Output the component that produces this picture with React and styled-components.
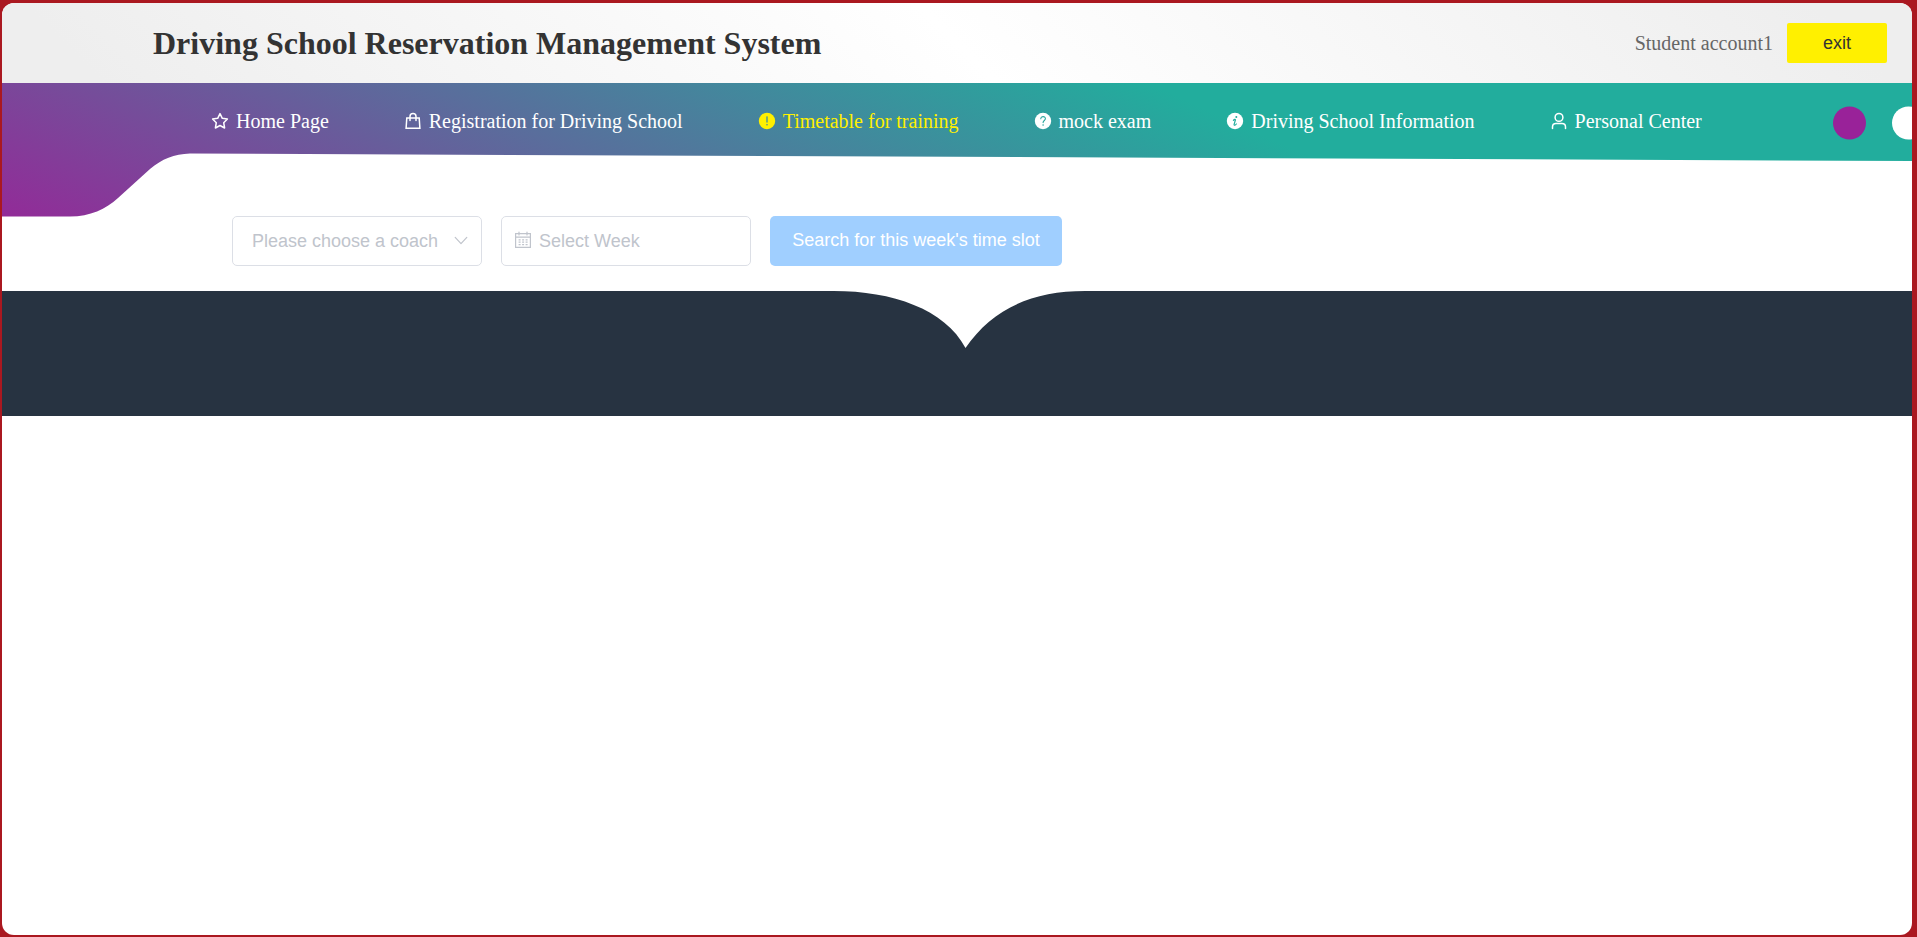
import React from "react";
import styled, { createGlobalStyle } from "styled-components";

const GlobalStyle = createGlobalStyle`
  * { box-sizing: border-box; }
  body {
    margin: 0;
    background: #aa1820;
    font-family: "Liberation Serif", serif;
  }
  #root { display: flow-root; }
`;

const sans = `"Liberation Sans", sans-serif`;

const Frame = styled.div`
  margin: 3px 5px 2px 2px;
  min-height: calc(100vh - 5px);
  border-radius: 12px;
  overflow: hidden;
  background: #fff;
`;

const Header = styled.header`
  display: flex;
  align-items: center;
  height: 80px;
  padding: 0 25px 0 151px;
  background: linear-gradient(45deg, #eee 5%, #fff 50%, #eee 95%);
`;

const Title = styled.h1`
  flex: 1;
  margin: 0;
  font-size: 32px;
  line-height: 40px;
  color: #333;
`;

const Account = styled.span`
  margin-right: 14px;
  font-size: 20px;
  color: #666;
`;

const ExitButton = styled.button`
  width: 100px;
  height: 40px;
  padding: 0;
  border: 0;
  border-radius: 2px;
  background: #fff000;
  color: #333;
  font: 18px ${sans};
`;

const Nav = styled.nav`
  position: relative;
  height: 133px;
`;

const NavBackdrop = styled.svg`
  position: absolute;
  inset: 0;
  width: 100%;
  height: 134px;
`;

const NavList = styled.ul`
  position: relative;
  display: flex;
  gap: 72px;
  margin: 0;
  padding: 8px 0 0 206px;
  list-style: none;
`;

const NavLink = styled.a`
  display: flex;
  align-items: center;
  gap: 4px;
  height: 60px;
  white-space: nowrap;
  font-size: 20px;
  text-decoration: none;
  color: ${(p) => (p.$active ? "#fff000" : "#fff")};
`;

const IconBox = styled.span`
  display: flex;
  justify-content: center;
  width: 24px;
`;

const Filters = styled.form`
  display: flex;
  gap: 19px;
  padding: 0 230px 25px;
`;

const Field = styled.div`
  display: flex;
  position: relative;
  width: 250px;
  height: 50px;
  color: #c0c4cc;
`;

const fieldStyle = `
  width: 100%;
  border: 1px solid #dcdfe6;
  border-radius: 5px;
  background: #fff;
  color: #c0c4cc;
  font: 18px ${sans};
  outline: 0;
`;

const CoachSelect = styled.select`
  ${fieldStyle}
  appearance: none;
  padding: 0 40px 0 19px;
`;

const WeekInput = styled.input`
  ${fieldStyle}
  padding: 0 12px 0 37px;
  &::placeholder { color: #c0c4cc; opacity: 1; }
`;

const FieldIcon = styled.svg`
  position: absolute;
  top: 15px;
  left: ${(p) => (p.$end ? "auto" : "13px")};
  right: ${(p) => (p.$end ? "12px" : "auto")};
  pointer-events: none;
`;

const SearchButton = styled.button`
  width: 292px;
  height: 50px;
  padding: 0 0 2px;
  border: 0;
  border-radius: 5px;
  background: #a0cfff;
  color: #fff;
  font: 18px ${sans};
`;

const Footer = styled.footer`
  height: 125px;
  background: #273341;
`;

const Notch = styled.svg`
  display: block;
  width: 100%;
  height: 58px;
`;

const line = { fill: "none", stroke: "currentColor", strokeWidth: 1.5, strokeLinejoin: "round", strokeLinecap: "round" };

const icons = {
  star: (
    <path {...line} d="M9 1.6 11.3 6.3 16.4 7 12.7 10.7 13.6 16 9 13.5 4.4 16 5.3 10.7 1.6 7 6.7 6.3Z" />
  ),
  bag: (
    <path {...line} strokeLinejoin="miter" d="M2.8 6H15.2L15.9 16.2H2.1ZM6 8.4V4.4C6 .5 12 .5 12 4.4V8.4" />
  ),
  warning: (
    <>
      <circle cx="9" cy="9" r="8.2" fill="currentColor" />
      <path d="M9 4.8V10" stroke="#3f8d9e" strokeWidth="1.3" strokeLinecap="round" />
      <circle cx="9" cy="12.8" r=".8" fill="#3f8d9e" />
    </>
  ),
  question: (
    <>
      <circle cx="9" cy="9" r="8.2" fill="currentColor" />
      <path d="M6.8 6.8C6.8 3.8 11.5 4 11.4 6.8 11.3 8.5 9.1 8.5 9.1 10.6" fill="none" stroke="#28a59c" strokeWidth="1.1" strokeLinecap="round" />
      <circle cx="9.1" cy="13" r=".8" fill="#28a59c" />
    </>
  ),
  info: (
    <>
      <circle cx="9" cy="9" r="8.2" fill="currentColor" />
      <circle cx="10.3" cy="4.9" r="1" fill="#22ad9d" />
      <path d="M7.4 8.3C8.2 7.5 9.6 6.9 9.4 8L8.1 12.4C7.9 13.9 9.4 13.2 10.3 12" fill="none" stroke="#22ad9d" strokeWidth="1.2" strokeLinecap="round" strokeLinejoin="round" />
    </>
  ),
  user: (
    <>
      <circle cx="9" cy="5.4" r="3.9" {...line} />
      <path {...line} d="M2.5 16.4V15C2.5 12.6 4 11.6 6 11.6H12C14 11.6 15.5 12.6 15.5 15V16.4" />
    </>
  ),
};

const items = [
  { label: "Home Page", icon: "star" },
  { label: "Registration for Driving School", icon: "bag" },
  { label: "Timetable for training", icon: "warning", active: true },
  { label: "mock exam", icon: "question" },
  { label: "Driving School Information", icon: "info" },
  { label: "Personal Center", icon: "user" },
];

export default function App() {
  return (
    <>
      <GlobalStyle />
      <Frame>
        <Header>
          <Title>Driving School Reservation Management System</Title>
          <Account>Student account1</Account>
          <ExitButton type="button">exit</ExitButton>
        </Header>
        <Nav>
          <NavBackdrop viewBox="0 0 1910 134" preserveAspectRatio="none" aria-hidden="true">
            <defs>
              <linearGradient id="sweep" gradientUnits="userSpaceOnUse" x1="0" y1="134" x2="247" y2="-409">
                <stop offset="0" stopColor="#922b98" />
                <stop offset="0.5" stopColor="#596e9c" />
                <stop offset="1" stopColor="#22ad9d" />
              </linearGradient>
            </defs>
            <path fill="url(#sweep)" d="M0 0H1910V78L188 70.5C172 71 160 76 148 86L116 115C104 126 88 133.5 68 133.5H0Z" />
            <circle cx="1847.5" cy="40" r="16.5" fill="#992299" />
            <circle cx="1906.5" cy="40" r="16.5" fill="#fff" />
          </NavBackdrop>
          <NavList>
            {items.map((item) => (
              <li key={item.label}>
                <NavLink href="#" $active={item.active}>
                  <IconBox>
                    <svg width="18" height="18" viewBox="0 0 18 18" aria-hidden="true">{icons[item.icon]}</svg>
                  </IconBox>
                  {item.label}
                </NavLink>
              </li>
            ))}
          </NavList>
        </Nav>
        <Filters>
          <Field>
            <CoachSelect aria-label="Coach" defaultValue="">
              <option value="">Please choose a coach</option>
            </CoachSelect>
            <FieldIcon $end width="18" height="18" viewBox="0 0 18 18" aria-hidden="true">
              <path {...line} strokeWidth="1.2" d="M3.2 6.4 9 12.6 14.8 6.4" />
            </FieldIcon>
          </Field>
          <Field>
            <WeekInput type="text" aria-label="Week" placeholder="Select Week" />
            <FieldIcon width="18" height="18" viewBox="0 0 18 18" aria-hidden="true">
              <path {...line} strokeWidth="1.2" strokeLinejoin="miter" d="M1.6 2.6H16.4V16.4H1.6ZM1.6 6.2H16.4M5 1V4M13 1V4" />
              <path fill="none" stroke="currentColor" strokeWidth="1.2" strokeDasharray="2 1.5" d="M4.6 8.8H13.6M4.6 11.2H13.6M4.6 13.6H13.6" />
            </FieldIcon>
          </Field>
          <SearchButton type="button">Search for this week's time slot</SearchButton>
        </Filters>
        <Footer>
          <Notch viewBox="0 0 1910 58" preserveAspectRatio="none" aria-hidden="true">
            <path fill="#fff" d="M832 0C890 0 943 18 963.5 57C990 18 1030 0 1083 0Z" />
          </Notch>
        </Footer>
      </Frame>
    </>
  );
}
